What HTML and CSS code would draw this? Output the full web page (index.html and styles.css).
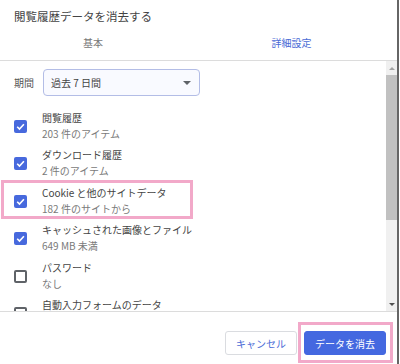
FILE: index.html
```html
<!DOCTYPE html>
<html lang="ja">
<head>
    <meta charset="UTF-8">
    <meta name="viewport" content="width=device-width, initial-scale=1.0">
    <title>閲覧履歴データを消去する</title>
    <link rel="stylesheet" href="styles.css">
</head>

<body>
    <div class="dialog">
        <div class="title">閲覧履歴データを消去する</div>

        <div class="tabs">
            <div class="tab">基本</div>
            <div class="tab active">詳細設定</div>
        </div>

        <div class="body">
            <div class="content">
                <div class="period">
                    <span class="period-label">期間</span>
                    <div class="select">
                        <span>過去 7 日間</span>
                        <span class="caret"></span>
                    </div>
                </div>

                <div class="item">
                    <span class="check on"><svg viewBox="0 0 13 13"><path d="M3.2 6.7 5.5 9 9.9 4.3"/></svg></span>
                    <div class="item-text">
                        <div class="item-title">閲覧履歴</div>
                        <div class="item-sub">203 件のアイテム</div>
                    </div>
                </div>

                <div class="item">
                    <span class="check on"><svg viewBox="0 0 13 13"><path d="M3.2 6.7 5.5 9 9.9 4.3"/></svg></span>
                    <div class="item-text">
                        <div class="item-title">ダウンロード履歴</div>
                        <div class="item-sub">2 件のアイテム</div>
                    </div>
                </div>

                <div class="item">
                    <span class="mark mark-item"></span>
                    <span class="check on"><svg viewBox="0 0 13 13"><path d="M3.2 6.7 5.5 9 9.9 4.3"/></svg></span>
                    <div class="item-text">
                        <div class="item-title">Cookie と他のサイトデータ</div>
                        <div class="item-sub">182 件のサイトから</div>
                    </div>
                </div>

                <div class="item">
                    <span class="check on"><svg viewBox="0 0 13 13"><path d="M3.2 6.7 5.5 9 9.9 4.3"/></svg></span>
                    <div class="item-text">
                        <div class="item-title">キャッシュされた画像とファイル</div>
                        <div class="item-sub">649 MB 未満</div>
                    </div>
                </div>

                <div class="item">
                    <span class="check"></span>
                    <div class="item-text">
                        <div class="item-title">パスワード</div>
                        <div class="item-sub">なし</div>
                    </div>
                </div>

                <div class="item">
                    <span class="check"></span>
                    <div class="item-text">
                        <div class="item-title">自動入力フォームのデータ</div>
                        <div class="item-sub">&nbsp;</div>
                    </div>
                </div>
            </div>

            <div class="scrollbar">
                <div class="sb-btn"><span class="sb-up"></span></div>
                <div class="sb-thumb"></div>
                <div class="sb-track"></div>
                <div class="sb-btn"><span class="sb-down"></span></div>
            </div>
        </div>

        <div class="footer">
            <button type="button" class="btn">キャンセル</button>
            <span class="btn-wrap">
                <button type="button" class="btn primary">データを消去</button>
                <span class="mark mark-btn"></span>
            </span>
        </div>
    </div>
</body>
</html>
```

FILE: styles.css
```css
body {
    margin: 0;
    padding: 0;
    background-color: #fff;
    font-family: "Noto Sans CJK JP", "Liberation Sans", sans-serif;
    color: #444;
}

.dialog {
    width: 397px;
    height: 364px;
    border-right: 2px solid #666;
    display: flex;
    flex-direction: column;
    overflow: hidden;
}

.title {
    height: 32px;
    line-height: 32px;
    padding-left: 14px;
    font-size: 11.5px;
    color: #444;
}

/* tab row */
.tabs {
    display: grid;
    grid-template-columns: 186px 1fr;
    height: 28px;
    border-bottom: 1px solid #dcdcdc;
}

.tab {
    text-align: center;
    font-size: 10px;
    line-height: 22px;
    color: #777;
}

.tab.active {
    color: #4a6bd6;
}

/* scrolling list */
.body {
    display: flex;
    height: 250px;
    border-bottom: 1px solid #dcdcdc;
}

.content {
    flex: 1;
    overflow: hidden;
    padding: 8px 0 0 14px;
}

.period {
    display: flex;
    align-items: center;
    gap: 9px;
    margin-bottom: 11px;
}

.period-label {
    font-size: 10px;
    color: #555;
}

.select {
    width: 141px;
    height: 25px;
    border: 1px solid #b3bde6;
    border-radius: 4px;
    background-color: #f9faff;
    display: flex;
    align-items: center;
    justify-content: space-between;
    padding: 0 7px 0 7px;
    font-size: 10px;
    color: #444;
}

.caret {
    width: 0;
    height: 0;
    border-left: 4px solid transparent;
    border-right: 4px solid transparent;
    border-top: 4px solid #5f6368;
    margin-right: 1px;
}

.item {
    position: relative;
    display: flex;
    align-items: center;
    height: 37.5px;
}

.check {
    width: 13px;
    height: 13px;
    box-sizing: border-box;
    border: 2px solid #5f6368;
    border-radius: 2px;
    margin-top: 1px;
    flex-shrink: 0;
}

.check.on {
    border: none;
    background-color: #4769dd;
}

.check svg {
    display: block;
    width: 13px;
    height: 13px;
    fill: none;
    stroke: #fff;
    stroke-width: 1.6;
}

.item-text {
    margin-left: 15px;
    font-size: 10px;
    line-height: 16px;
}

.item-title {
    color: #444;
}

.item-sub {
    color: #7a7a7a;
}

/* fake scrollbar */
.scrollbar {
    width: 11px;
    display: flex;
    flex-direction: column;
    background-color: #f0f0f0;
}

.sb-btn {
    height: 14px;
    display: flex;
    align-items: center;
    justify-content: center;
}

.sb-up {
    border-left: 3px solid transparent;
    border-right: 3px solid transparent;
    border-bottom: 3px solid #a3a3a3;
}

.sb-down {
    border-left: 3px solid transparent;
    border-right: 3px solid transparent;
    border-top: 3px solid #505050;
}

.sb-thumb {
    height: 145px;
    background-color: #c1c1c1;
}

.sb-track {
    flex: 1;
}

/* buttons */
.footer {
    flex: 1;
    display: flex;
    justify-content: flex-end;
    align-items: flex-start;
    gap: 7px;
    padding: 19px 11px 0 0;
}

.btn {
    height: 24px;
    padding: 0 10px;
    border: 1px solid #dadce0;
    border-radius: 3px;
    background-color: #fff;
    font-family: inherit;
    font-size: 10px;
    color: #4a6bd6;
}

.btn.primary {
    width: 82px;
    border-color: #4468e0;
    background-color: #4468e0;
    color: #fff;
}

.btn-wrap {
    position: relative;
    display: flex;
}

/* pink annotation frames */
.mark {
    position: absolute;
    border: 3px solid #f2a9c9;
}

.mark-item {
    left: -13px;
    top: -2px;
    width: 186px;
    height: 33px;
}

.mark-btn {
    left: -6px;
    top: -9px;
    width: 89px;
    height: 35px;
}
```
